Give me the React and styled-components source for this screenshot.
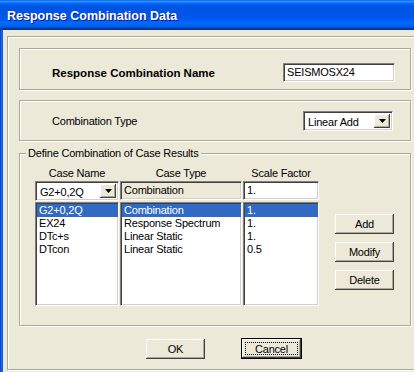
import styled, { createGlobalStyle } from "styled-components";

const GlobalStyle = createGlobalStyle`
  html, body {
    margin: 0;
    padding: 0;
    background: #ece9d8;
  }
  body {
    font-family: "Liberation Sans", Arial, sans-serif;
    font-size: 11px;
    color: #000;
  }
  * {
    box-sizing: border-box;
  }
`;

const rows = [
  { name: "G2+0,2Q", type: "Combination", factor: "1." },
  { name: "EX24", type: "Response Spectrum", factor: "1." },
  { name: "DTc+s", type: "Linear Static", factor: "1." },
  { name: "DTcon", type: "Linear Static", factor: "0.5" },
];

function DropArrow() {
  return (
    <svg width="7" height="4" viewBox="0 0 7 4">
      <polygon points="0,0 7,0 3.5,4" fill="#000" />
    </svg>
  );
}

export default function App() {
  return (
    <>
      <GlobalStyle />
      <Window>
        <TitleBar>Response Combination Data</TitleBar>
        <Body>
          <SideBorder />
          <Content>
            <Frame>
              <NameGroup>
                <BoldLabel>Response Combination Name</BoldLabel>
                <TextField $width={112}>SEISMOSX24</TextField>
              </NameGroup>

              <TypeGroup>
                <Label>Combination Type</Label>
                <Select $width={90}>
                  <SelectText>Linear Add</SelectText>
                  <DropButton>
                    <DropArrow />
                  </DropButton>
                </Select>
              </TypeGroup>

              <CaseGroup>
                <GroupTitle>Define Combination of Case Results</GroupTitle>
                <CaseTable>
                  <ColHead>Case Name</ColHead>
                  <ColHead>Case Type</ColHead>
                  <ColHead>Scale Factor</ColHead>

                  <Select $width={84}>
                    <SelectText>G2+0,2Q</SelectText>
                    <DropButton>
                      <DropArrow />
                    </DropButton>
                  </Select>
                  <ReadOnlyField>Combination</ReadOnlyField>
                  <TextField $width={76}>1.</TextField>

                  <ListBox>
                    {rows.map((r, i) => (
                      <ListRow key={r.name} $selected={i === 0}>
                        {r.name}
                      </ListRow>
                    ))}
                  </ListBox>
                  <ListBox>
                    {rows.map((r, i) => (
                      <ListRow key={r.name} $selected={i === 0}>
                        {r.type}
                      </ListRow>
                    ))}
                  </ListBox>
                  <ListBox>
                    {rows.map((r, i) => (
                      <ListRow key={r.name} $selected={i === 0}>
                        {r.factor}
                      </ListRow>
                    ))}
                  </ListBox>
                </CaseTable>

                <SideButtons>
                  <Button>Add</Button>
                  <Button>Modify</Button>
                  <Button>Delete</Button>
                </SideButtons>
              </CaseGroup>

              <Footer>
                <Button>OK</Button>
                <DefaultButton>
                  <FocusText>Cancel</FocusText>
                </DefaultButton>
              </Footer>
            </Frame>
          </Content>
        </Body>
      </Window>
    </>
  );
}

const Window = styled.div`
  width: 414px;
  height: 372px;
  overflow: hidden;
  display: flex;
  flex-direction: column;
  background: #ece9d8;
`;

const TitleBar = styled.div`
  height: 30px;
  flex: none;
  display: flex;
  align-items: center;
  padding-left: 7px;
  padding-top: 1px;
  background: linear-gradient(
    to bottom,
    #0058ee 0%,
    #3593ff 4%,
    #288eff 6%,
    #127dff 8%,
    #036ffc 10%,
    #0262ee 14%,
    #0057e5 20%,
    #0054e3 24%,
    #0055eb 56%,
    #005bf5 66%,
    #026afe 76%,
    #0062ef 86%,
    #0052d6 92%,
    #0040ab 94%,
    #003092 100%
  );
  color: #fff;
  font-family: "Liberation Sans", Arial, sans-serif;
  font-weight: 700;
  font-size: 12.5px;
  text-shadow: 1px 1px #0a1883;
`;

const Body = styled.div`
  flex: 1;
  display: flex;
  min-height: 0;
`;

const SideBorder = styled.div`
  width: 3px;
  flex: none;
  background: linear-gradient(to right, #0831d9, #166aee, #0855dd);
`;

const Content = styled.div`
  flex: 1;
  padding: 6px 0 0 4px;
  min-width: 0;
`;

const Frame = styled.div`
  width: 430px;
  height: 334px;
  border: 1px solid #aca899;
  box-shadow: inset 1px 1px #fff, 1px 1px #fff;
  padding: 11px 0 0 11px;
  display: flex;
  flex-direction: column;
  align-items: flex-start;
`;

const Group = styled.div`
  width: 392px;
  border: 1px solid #aca899;
  box-shadow: inset 1px 1px #fff, 1px 1px #fff;
`;

const NameGroup = styled(Group)`
  height: 42px;
  display: flex;
  align-items: center;
  padding: 7px 15px 0 32px;
  justify-content: space-between;
`;

const TypeGroup = styled(Group)`
  height: 41px;
  margin-top: 10px;
  display: flex;
  align-items: center;
  padding: 0 17px 0 32px;
  justify-content: space-between;
`;

const CaseGroup = styled(Group)`
  position: relative;
  height: 173px;
  margin-top: 12px;
  display: flex;
  align-items: flex-start;
  padding: 12px 0 0 15px;
`;

const GroupTitle = styled.div`
  position: absolute;
  top: -7px;
  left: 6px;
  padding: 0 2px;
  background: #ece9d8;
  line-height: 13px;
  letter-spacing: -0.2px;
`;

const BoldLabel = styled.div`
  font-weight: 700;
  font-size: 11.5px;
`;

const Label = styled.div`
  font-size: 11px;
  letter-spacing: -0.2px;
`;

const sunken = `
  border-top: 1px solid #808080;
  border-left: 1px solid #808080;
  border-right: 1px solid #fff;
  border-bottom: 1px solid #fff;
  box-shadow: inset 1px 1px #404040, inset -1px -1px #d4d0c8;
`;

const TextField = styled.div`
  width: ${(p) => p.$width}px;
  height: 19px;
  ${sunken}
  background: #fff;
  padding: 0 2px 0 3px;
  line-height: 17px;
  letter-spacing: -0.2px;
  white-space: nowrap;
  overflow: hidden;
`;

const ReadOnlyField = styled(TextField)`
  width: 122px;
  background: #ece9d8;
`;

const Select = styled.div`
  width: ${(p) => p.$width}px;
  height: 20px;
  ${sunken}
  background: #fff;
  display: flex;
  align-items: stretch;
  padding: 2px 2px 2px 2px;
`;

const SelectText = styled.div`
  flex: 1;
  padding-left: 2px;
  line-height: 16px;
  letter-spacing: -0.2px;
  white-space: nowrap;
  overflow: hidden;
`;

const DropButton = styled.div`
  width: 16px;
  flex: none;
  display: flex;
  align-items: center;
  justify-content: center;
  background: #ece9d8;
  box-shadow: inset -1px -1px #404040, inset 1px 1px #fff,
    inset -2px -2px #aca899;
`;

const CaseTable = styled.div`
  display: grid;
  grid-template-columns: 84px 122px 76px;
  grid-template-rows: 15px 19px 106px;
  column-gap: 1px;
`;

const ColHead = styled.div`
  text-align: center;
  line-height: 14px;
  letter-spacing: -0.2px;
`;

const ListBox = styled.div`
  margin-top: 2px;
  ${sunken}
  background: #fff;
  padding-top: 1px;
  padding-left: 1px;
  overflow: hidden;
`;

const ListRow = styled.div`
  height: 13px;
  line-height: 13px;
  padding-left: 2px;
  letter-spacing: -0.2px;
  white-space: nowrap;
  background: ${(p) => (p.$selected ? "#316ac5" : "transparent")};
  color: ${(p) => (p.$selected ? "#fff" : "#000")};
`;

const SideButtons = styled.div`
  display: flex;
  flex-direction: column;
  gap: 8px;
  margin-left: 16px;
  margin-top: 48px;
`;

const Button = styled.div`
  width: 59px;
  height: 20px;
  display: flex;
  align-items: center;
  justify-content: center;
  background: #ece9d8;
  box-shadow: inset -1px -1px #404040, inset 1px 1px #fff,
    inset -2px -2px #aca899;
  letter-spacing: -0.2px;
`;

const Footer = styled.div`
  display: flex;
  align-items: center;
  margin-top: 12px;
  margin-left: 127px;
  gap: 36px;
  height: 21px;
`;

const DefaultButton = styled(Button)`
  width: 61px;
  height: 21px;
  border: 1px solid #000;
  position: relative;
`;

const FocusText = styled.span`
  &::after {
    content: "";
    position: absolute;
    inset: 3px;
    border: 1px dotted #000;
  }
`;
